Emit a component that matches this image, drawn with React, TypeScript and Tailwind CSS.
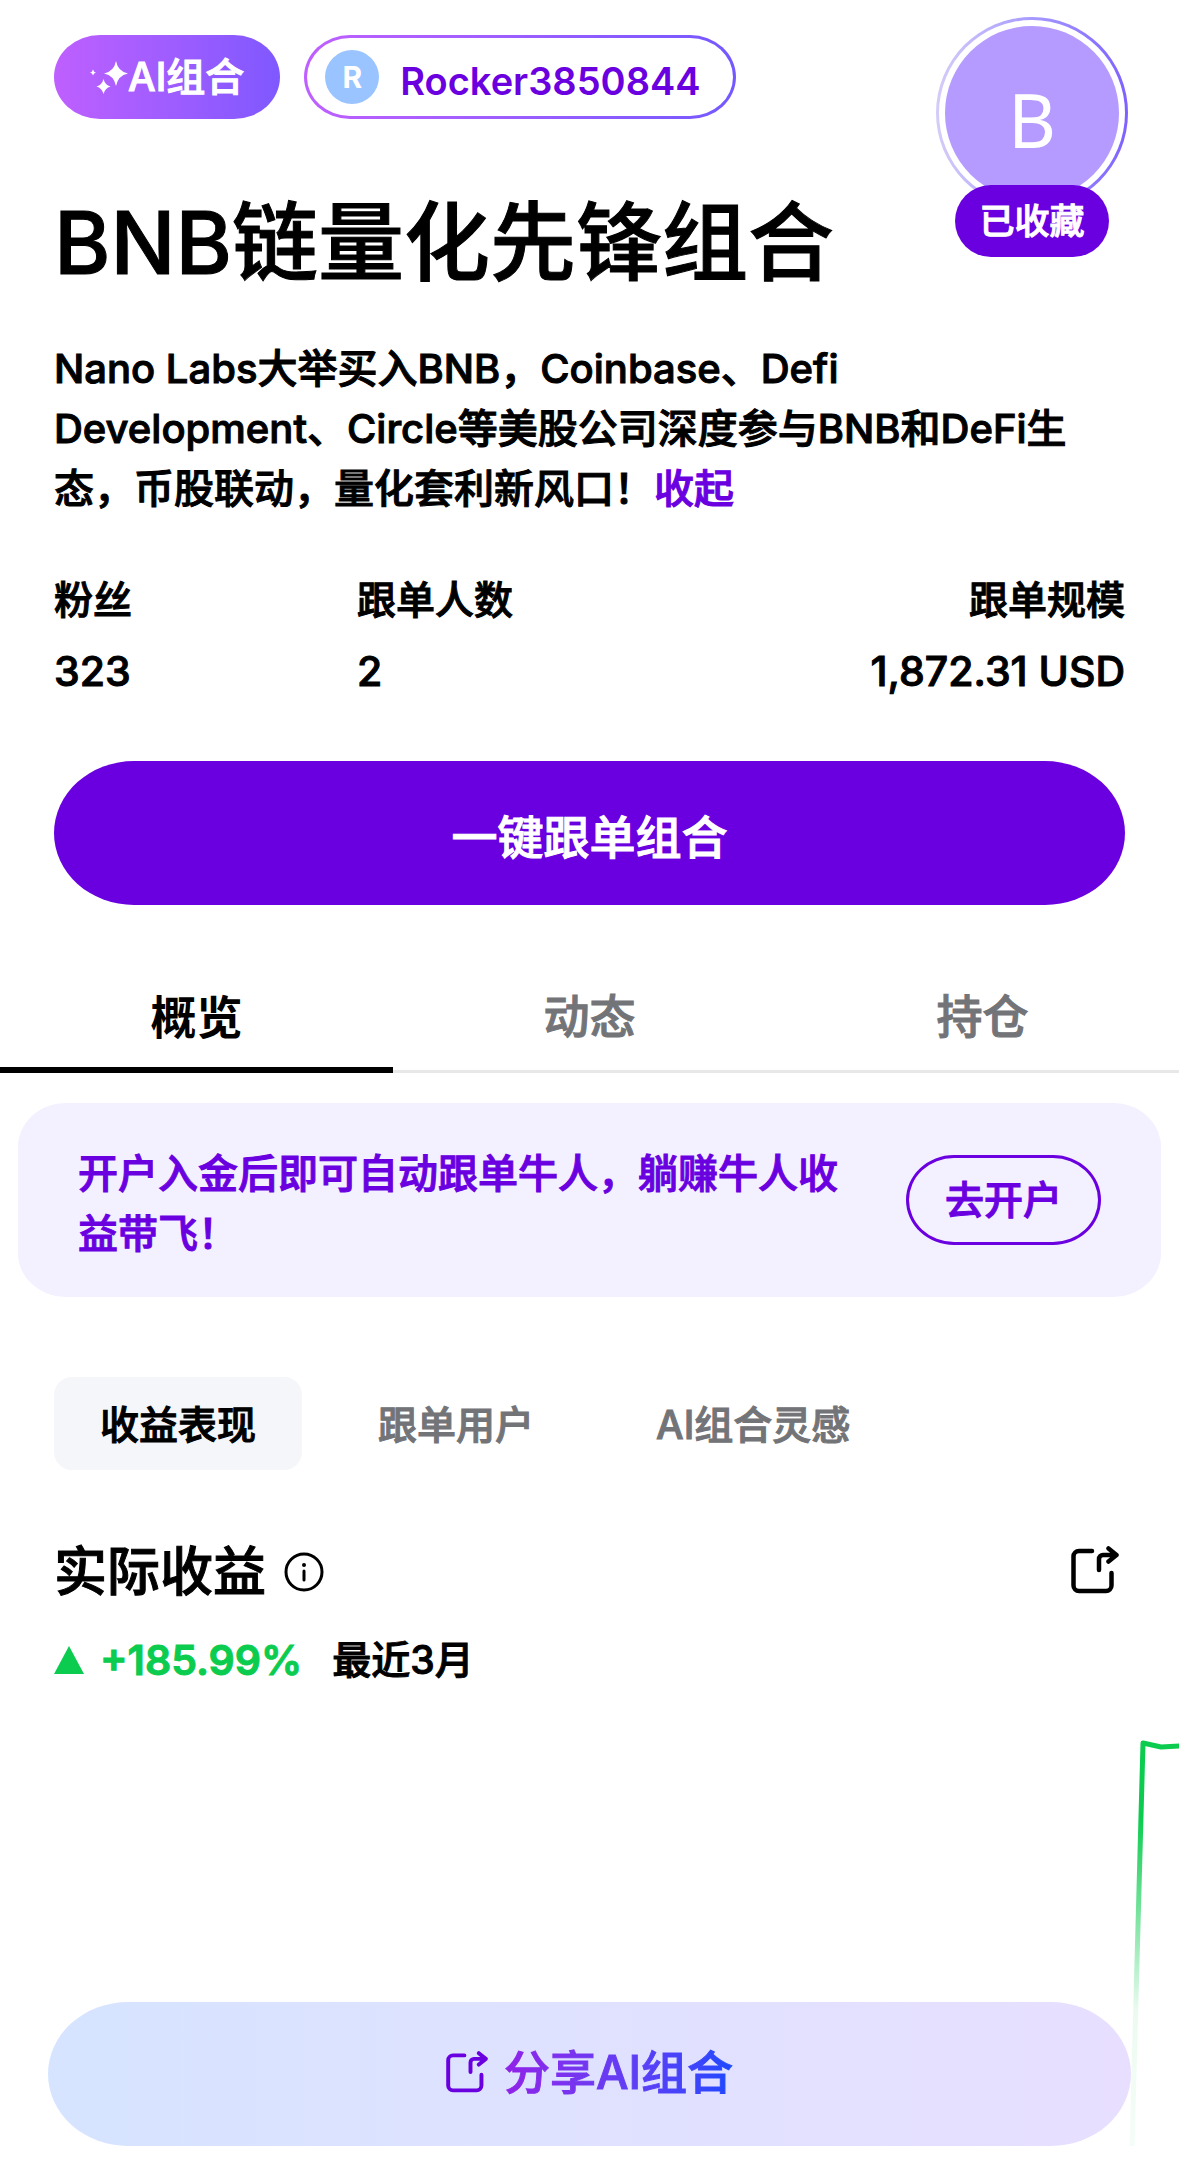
import { useState } from "react";

const ShareIcon: React.FC<{ className?: string }> = ({ className }) => {
    return (
        <svg viewBox="0 0 48 48" className={className} fill="none" stroke="currentColor" strokeWidth="4.5" strokeLinecap="round" strokeLinejoin="round" aria-hidden="true">
            <path d="M21 5H8a5.500 5.500 0 0 0-5.500 5.500v29A5.500 5.500 0 0 0 8 45h27a5.500 5.500 0 0 0 5.500-5.500V27" />
            <path d="M28 24V13a4 4 0 0 1 4-4h13M37.500 2.500l8 6.500-8 6.500" />
        </svg>
    )
}

const SparkleIcon: React.FC = () => {
    return (
        <svg viewBox="0 0 38 33" className="h-[33px] w-[38px] shrink-0" fill="white" aria-hidden="true">
            <path d="M26 0Q28 10.500 38 12.500 28 14.500 26 25 24 14.500 14 12.500 24 10.500 26 0Z" />
            <path d="M13.500 18Q15 24 20.500 25.500 15 27 13.500 33 12 27 6.500 25.500 12 24 13.500 18Z" />
            <path d="M3 8.500Q3.600 11 6 11.500 3.600 12 3 14.500 2.400 12 0 11.500 2.400 11 3 8.500Z" />
        </svg>
    )
}

const Stat: React.FC<{ label: string; value: string; className?: string }> = ({ label, value, className }) => {
    return (
        <div className={className}>
            <dt className="leading-[54px]">{label}</dt>
            <dd className="mt-4 text-[41px] leading-[56px]">{value}</dd>
        </div>
    )
}

const tabs = ["概览", "动态", "持仓"];
const subTabs = ["收益表现", "跟单用户", "AI组合灵感"];

export default function App() {
    const [tab, setTab] = useState(0);
    const [subTab, setSubTab] = useState(0);

    return (
        <div className="relative min-h-screen overflow-hidden bg-white pb-7 font-['Inter','Noto_Sans_CJK_SC',sans-serif] text-[39px] font-medium text-black [-webkit-text-stroke:1px]">
            <header className="flex items-start justify-between pl-[54px] pr-[51px] pt-[17px]">
                <div>
                    <div className="flex gap-6 pt-[18px]">
                        <span className="flex h-[84px] items-center rounded-[46px/42px] bg-linear-to-r from-[#bf5fff] to-[#7f58ff] px-9 text-white">
                            <SparkleIcon />
                            AI组合
                        </span>
                        <a href="#user" className="rounded-[46px/42px] bg-linear-to-r from-[#bf5fff] to-[#7458ff] p-[3px] text-[#6a00e0] [-webkit-text-stroke:0]">
                            <span className="flex h-[78px] items-center rounded-[43px/39px] bg-white pl-[18px] pr-8">
                                <span className="mr-[21px] flex size-[54px] items-center justify-center rounded-full bg-[#9ac4ff] text-[30px] font-bold text-white">R</span>
                                <span className="pt-2 text-[38px] font-semibold">Rocker3850844</span>
                            </span>
                        </a>
                    </div>
                    <h1 className="mt-[62px] text-[86px] leading-[124px] whitespace-nowrap">BNB链量化先锋组合</h1>
                </div>
                <div className="flex flex-col items-center">
                    <div className="size-[192px] rounded-full bg-linear-to-r from-[#d5ccf8] to-[#7f60ff] p-[3px]">
                        <div className="size-full rounded-full bg-white p-[6px]">
                            <div className="flex size-full items-center justify-center rounded-full bg-[#b59aff] pt-3 font-['Noto_Sans',sans-serif] text-[74px] font-normal text-white [-webkit-text-stroke:0]">B</div>
                        </div>
                    </div>
                    <button className="relative -mt-6 h-[72px] rounded-full bg-[#6a00e0] px-6 text-[35px] text-white">已收藏</button>
                </div>
            </header>

            <section className="px-[54px]">
                <p className="mt-[34px] pr-10 text-[40px] leading-[60px]">
                    Nano Labs大举买入BNB，Coinbase、Defi Development、Circle等美股公司深度参与BNB和DeFi生态，币股联动，量化套利新风口！
                    <button className="text-[#6a00e0]">收起</button>
                </p>

                <dl className="mt-[54px] grid grid-cols-[303px_1fr_auto]">
                    <Stat label="粉丝" value="323" />
                    <Stat label="跟单人数" value="2" />
                    <Stat label="跟单规模" value="1,872.31 USD" className="text-right" />
                </dl>

                <button className="mt-[62px] h-36 w-full rounded-[80px/72px] bg-[#6a00e0] pt-2 text-[46px] text-white">一键跟单组合</button>
            </section>

            <nav className="mt-[62px] grid grid-cols-3 border-b-[3px] border-[#e8e8e8] text-[46px]">
                {tabs.map((t, index) => {
                    return (
                        <button
                            key={t}
                            onClick={() => setTab(index)}
                            className={tab === index ? "relative z-10 -mb-[3px] h-[106px] border-b-[6px] border-black font-bold [-webkit-text-stroke:0]" : "h-[103px] pb-1 text-[#737478]"}
                        >
                            {t}
                        </button>
                    )
                })}
            </nav>

            <section className="mx-[18px] mt-[30px] flex items-center justify-between rounded-[48px/44px] bg-[#f3f0ff] py-[33px] pl-[60px] pr-[60px] text-[#6a00e0]">
                <p className="w-[764px] pt-2 text-[40px] leading-[60px]">开户入金后即可自动跟单牛人，躺赚牛人收益带飞！</p>
                <button className="h-[90px] rounded-[48px/45px] border-[3px] border-[#6a00e0] px-9">去开户</button>
            </section>

            <div className="mt-20 flex gap-[30px] px-[54px]">
                {subTabs.map((t, index) => {
                    return (
                        <button
                            key={t}
                            onClick={() => setSubTab(index)}
                            className={subTab === index ? "h-[93px] rounded-[18px] bg-[#f5f6f9] px-[46px] pt-1" : "h-[93px] px-[46px] pt-1 text-[#737478]"}
                        >
                            {t}
                        </button>
                    )
                })}
            </div>

            <section className="mt-[66px] px-[54px]">
                <div className="flex items-center justify-between pr-[6px]">
                    <div className="flex items-center gap-[18px]">
                        <h2 className="text-[53px] leading-[72px]">实际收益</h2>
                        <svg viewBox="0 0 40 40" className="size-10" fill="none" stroke="currentColor" strokeWidth="3" strokeLinecap="round" aria-hidden="true">
                            <circle cx="20" cy="20" r="18" />
                            <path d="M20 19V28" />
                            <circle cx="20" cy="13" r="2" fill="currentColor" stroke="none" />
                        </svg>
                    </div>
                    <button aria-label="分享" className="pb-1"><ShareIcon className="size-12" /></button>
                </div>
                <div className="mt-[22px] flex items-center leading-[60px]">
                    <svg viewBox="0 0 30 28" className="h-7 w-[30px]" fill="#0bcc4f" aria-hidden="true"><path d="M15 0L30 28H0Z" /></svg>
                    <span className="ml-4 text-[41px] font-semibold text-[#0bcc4f]">+185.99%</span>
                    <span className="ml-[30px]">最近3月</span>
                </div>
            </section>

            {/* earnings chart, it runs under the share bar */}
            <div className="mt-[46px] flex justify-end">
                <svg viewBox="0 0 50 410" className="h-[410px] w-[50px]" fill="none" aria-hidden="true">
                    <defs>
                        <linearGradient id="line" x1="0" y1="0" x2="0" y2="410" gradientUnits="userSpaceOnUse">
                            <stop offset="0.2" stopColor="#0bcc4f" />
                            <stop offset="0.46" stopColor="#0bcc4f" stopOpacity="0.5" />
                            <stop offset="0.67" stopColor="#0bcc4f" stopOpacity="0.08" />
                            <stop offset="1" stopColor="#0bcc4f" stopOpacity="0.04" />
                        </linearGradient>
                    </defs>
                    <path d="M3 410L14 7L32 11L52 10" stroke="url(#line)" strokeWidth="5" strokeLinejoin="round" />
                </svg>
            </div>

            <button className="relative mx-12 -mt-36 flex h-36 w-[calc(100%-96px)] items-center justify-center gap-4 rounded-[80px/72px] bg-linear-to-r from-[#d6e4ff] to-[#e8dfff] pb-1">
                <ShareIcon className="size-[42px] text-[#6a00e0]" />
                <span className="bg-linear-to-r from-[#9020e8] to-[#1848ff] bg-clip-text text-[46px] text-transparent">分享AI组合</span>
            </button>
        </div>
    )
}
